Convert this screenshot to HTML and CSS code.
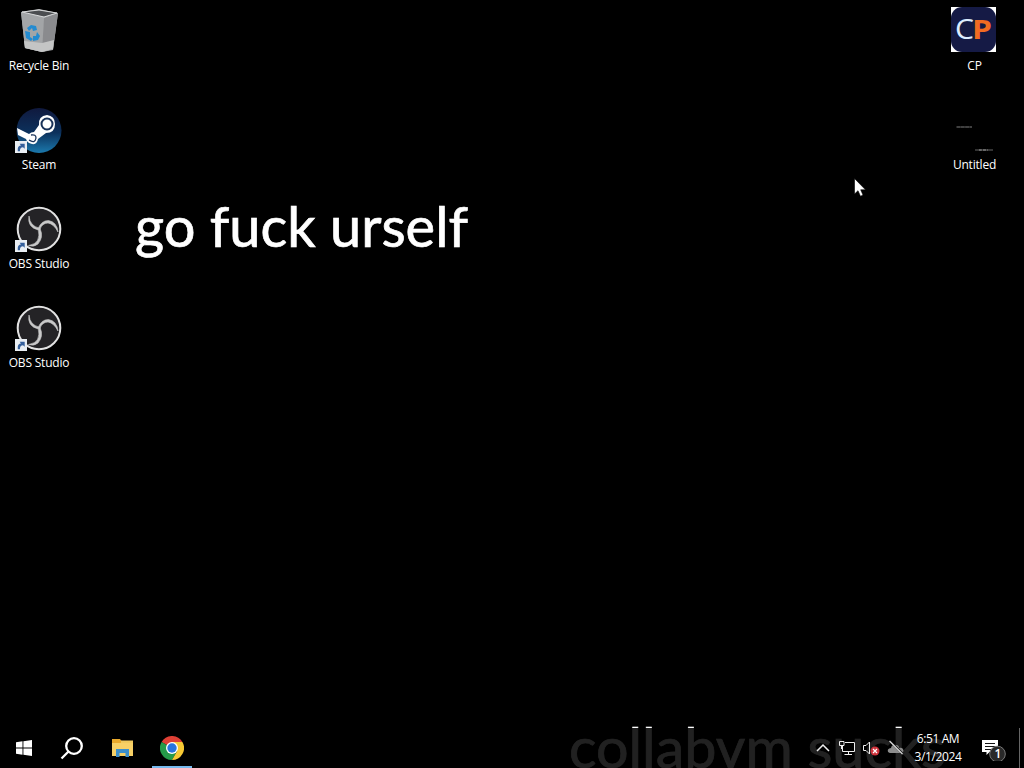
FILE: index.html
```html
<!DOCTYPE html>
<html lang="en">
<head>
    <meta charset="UTF-8">
    <title>Desktop</title>
    <link rel="stylesheet" href="styles.css">
</head>
<body>
    <svg class="symbols">
        <symbol id="shortcut" viewBox="0 0 13 13">
            <rect width="13" height="13" fill="#e9eef3"/>
            <path d="M3 11V8.5Q3.2 5.5 6.5 5L5 3H10.5V8.5L8.7 6.8Q5.3 7 5.3 11Z" fill="#345f9b"/>
        </symbol>
        <symbol id="obs" viewBox="0 0 46 46">
            <circle cx="23" cy="23" r="21.300" fill="#242326" stroke="#e2e2e2" stroke-width="2"/>
            <g fill="#c9c9c9" stroke="#c9c9c9" stroke-width=".6">
                <path d="M13 10Q14 20 23 22L22.500 24Q11 21.500 13 10Z"/>
                <path d="M22 23Q25 14.500 32.500 14.500Q41 16 42 26Q38 18 32 17Q26 17 24 23.500Z"/>
                <path d="M22 22.500H24Q28 31 22 38Q18 41.500 12.500 39.500Q26 37.500 22 22.500Z"/>
            </g>
        </symbol>
    </svg>

    <div class="desktop">
        <svg class="wallpaper" viewBox="0 0 1024 768">
            <text x="135" y="247" textLength="333" lengthAdjust="spacingAndGlyphs">go fuck urself</text>
            <text x="569" y="767.800" textLength="377" lengthAdjust="spacingAndGlyphs">collabvm sucks</text>
        </svg>

        <div class="icons">
            <div class="column">
                <div class="icon">
                    <svg viewBox="0 0 48 48">
                        <path d="M6 6L24 3L43 7L38 44L27 46L10 42Z" fill="#a9abad"/>
                        <path d="M6 6L29 12L27 46L10 42Z" fill="#a3a5a7"/>
                        <path d="M29 12L43 7L38 43L27 46Z" fill="#8a8b8e"/>
                        <path d="M9 35L27 37L39 34L38 43L27 46L10 42Z" fill="#c4c5c5"/>
                        <path d="M7 6L24 4L42 7L29 11Z" fill="#4b4d50" stroke="#d7d8d9"/>
                        <g fill="#248bd0">
                            <path d="M12 22L16 19L21 20L22 24L18 25L17 22L14 25Z"/>
                            <path d="M10 25L15 26L15 31L18 33L16 35L11 32Z"/>
                            <path d="M18 35V30L21 30L22 26L25 30L23 34Z"/>
                        </g>
                    </svg>
                    <span class="label">Recycle Bin</span>
                </div>
                <div class="icon">
                    <svg viewBox="0 0 48 48">
                        <defs>
                            <linearGradient id="steam" x2="0" y2="1">
                                <stop offset="0" stop-color="#10193e"/>
                                <stop offset=".55" stop-color="#0c315c"/>
                                <stop offset="1" stop-color="#1b79ad"/>
                            </linearGradient>
                        </defs>
                        <circle cx="24" cy="25.500" r="22.500" fill="url(#steam)"/>
                        <path d="M2 23L14 29Q16 27 19 27L24 20Q23 11 32 10Q40 11 40 19Q40 28 31 28L23 34Q22 40 17 39Q12 38 11 34L3 30Z" fill="#fff"/>
                        <circle cx="32" cy="19" r="5.500" fill="#fff" stroke="#183158" stroke-width="2"/>
                        <path d="M14 35Q20 39 21 33Q21 29 16 30" fill="none" stroke="#183158" stroke-width="1.3"/>
                        <use href="#shortcut" x="0" y="36" width="12" height="12"/>
                    </svg>
                    <span class="label">Steam</span>
                </div>
                <div class="icon">
                    <svg viewBox="0 0 48 48">
                        <use href="#obs" x="1" y="2" width="46" height="46"/>
                        <use href="#shortcut" x="0" y="36" width="12" height="12"/>
                    </svg>
                    <span class="label">OBS Studio</span>
                </div>
                <div class="icon">
                    <svg viewBox="0 0 48 48">
                        <use href="#obs" x="1" y="2" width="46" height="46"/>
                        <use href="#shortcut" x="0" y="36" width="12" height="12"/>
                    </svg>
                    <span class="label">OBS Studio</span>
                </div>
            </div>
            <div class="column">
                <div class="icon">
                    <svg viewBox="0 0 48 48">
                        <rect x="0" y="1" width="45" height="45" fill="#fff"/>
                        <rect x="0" y="1" width="45" height="45" rx="11" fill="#151a45"/>
                        <text class="logo" x="4" y="33" textLength="19" lengthAdjust="spacingAndGlyphs" fill="#dcecff">C</text>
                        <text class="logo bold" x="21" y="33" textLength="20" lengthAdjust="spacingAndGlyphs" fill="#f26b22">P</text>
                    </svg>
                    <span class="label">CP</span>
                </div>
                <div class="icon">
                    <svg viewBox="0 0 48 48">
                        <path d="M5.500 22H21" stroke="#555" stroke-width="1.500" stroke-dasharray="4 .3"/>
                        <path d="M24 45H42" stroke="#666" stroke-dasharray="6 .5"/>
                        <path d="M28 45H37" stroke="#999" stroke-dasharray="3 1"/>
                    </svg>
                    <span class="label">Untitled</span>
                </div>
            </div>
        </div>

        <div class="taskbar">
            <div class="button">
                <svg width="16" height="16" viewBox="0 0 16 16" fill="#fff"><path d="M0 2.200L6.500 1.300V7.500H0ZM7.400 1.200L16 0V7.500H7.400ZM0 8.400H6.500V14.700L0 13.800ZM7.400 8.400H16V16L7.400 14.800Z"/></svg>
            </div>
            <div class="button">
                <svg width="24" height="24" viewBox="0 0 24 24" fill="none" stroke="#fff" stroke-width="2.300"><circle cx="14" cy="10" r="7.800"/><path d="M8.500 15.500L1.500 22.500"/></svg>
            </div>
            <div class="button explorer">
                <svg width="24" height="24" viewBox="0 0 24 24"><path d="M1 3H9L10.500 5H22V20H1Z" fill="#e9a92c"/><path d="M1 7H22V20H1Z" fill="#f7d066"/><path d="M10 4.500H22V7H10Z" fill="#f0c95d"/><path d="M5 21V13H18V21H14.500V17H8.500V21Z" fill="#3c8fcb"/></svg>
            </div>
            <div class="button running">
                <svg width="24" height="24" viewBox="0 0 24 24"><path d="M12 12L1.600 6A12 12 0 0 1 22.400 6Z" fill="#df4035"/><path d="M12 12L1.600 6A12 12 0 0 0 12 24L17.200 15Z" fill="#259b49"/><path d="M12 6H22.400A12 12 0 0 1 12 24L17.200 15Z" fill="#f7c934"/><circle cx="12" cy="12" r="6" fill="#fff"/><circle cx="12" cy="12" r="4.700" fill="#2875df"/></svg>
            </div>

            <div class="tray">
                <svg width="16" height="16" viewBox="0 0 16 16" fill="none" stroke="#eee" stroke-width="1.500"><path d="M2 11L8 5L14 11"/></svg>
                <svg width="16" height="16" viewBox="0 0 16 16" fill="none" stroke="#eee"><path d="M6 2.500H15.500V11.500H3.500V6M9.500 11.500V14M5.500 14.500H13M.5 1.500H5V5.500H.5ZM2.500 5.500V9"/></svg>
                <svg width="18" height="16" viewBox="0 0 18 16"><path d="M.5 5.500H3L6.500 2V14L3 10.500H.5Z" fill="none" stroke="#eee"/><circle cx="12" cy="11" r="4.500" fill="#ce333c"/><path d="M10 9L14 13M14 9L10 13" stroke="#fff" stroke-width="1.200"/></svg>
                <svg width="18" height="16" viewBox="0 0 18 16"><path d="M3 13Q0 12 1 9.500Q2 8 4 8Q5 4 9 5Q12 5 12 8Q16 7 16.500 11Q16 13 14 13Z" fill="#8c8c8c"/><path d="M3 1L15.500 13.500" stroke="#111" stroke-width="2.200"/><path d="M2.500 1L15.500 14" stroke="#ddd" stroke-width="1.200"/></svg>
            </div>
            <div class="clock">
                <span>6:51 AM</span>
                <span>3/1/2024</span>
            </div>
            <div class="notifications">
                <svg width="26" height="26" viewBox="0 0 26 26"><path d="M1 5H17V17H8.500L5.500 20V17H1Z" fill="#fff"/><path d="M4 8.500H14M4 11.500H14M4 14.500H10" stroke="#151515"/><circle cx="16.500" cy="19" r="7.800" fill="#292929" stroke="#777"/><text class="count" x="13.500" y="23">1</text></svg>
            </div>
            <div class="show-desktop"></div>
        </div>

        <svg class="cursor" width="12" height="19" viewBox="0 0 12 19"><path d="M.5 .5V16L4 12.700L6.500 18.300L9 17L6.700 11.800H11.500Z" fill="#fff" stroke="#000" stroke-width=".6"/></svg>
    </div>
</body>
</html>
```
FILE: styles.css
```css
body {
    margin: 0;
    background-color: #000;
    color: #fff;
    font-family: "Open Sans", "Noto Sans", sans-serif;
    overflow: hidden;
}
.symbols {
    display: none;
}
.desktop {
    position: relative;
    display: flex;
    flex-direction: column;
    height: 768px;
}
.wallpaper {
    position: absolute;
    inset: 0;
    font-family: Lato, sans-serif;
    font-size: 57px;
    fill: #fff;
    stroke: #fff;
    stroke-width: 0.7px;
}
.icons {
    position: relative;
    flex: 1;
    display: flex;
    justify-content: space-between;
    padding: 6px 12px 0 1px;
}
.column {
    width: 76px;
}
.column:last-child {
    width: 75px;
}
.icon {
    display: flex;
    flex-direction: column;
    align-items: center;
    height: 99px;
}
.icon svg {
    width: 48px;
    height: 48px;
}
.label {
    font-size: 12px;
    line-height: 16px;
    margin-top: 4px;
    letter-spacing: -0.2px;
    white-space: nowrap;
}
.logo {
    font-size: 27px;
}
.bold {
    font-weight: 700;
}
.taskbar {
    position: relative;
    display: flex;
    height: 40px;
    background-color: rgba(0, 0, 0, 0.87);
}
.button {
    display: flex;
    align-items: center;
    justify-content: center;
    width: 48px;
}
.button.explorer {
    width: 54px;
}
.button.running {
    width: 40px;
    box-sizing: border-box;
    margin-left: 2px;
    border-bottom: 2px solid #76b9ed;
    padding-top: 2px;
}
.tray {
    display: flex;
    align-items: center;
    gap: 8px;
    margin-left: auto;
}
.tray svg:nth-child(4) {
    margin-left: -2px;
}
.clock {
    display: flex;
    flex-direction: column;
    align-items: center;
    width: 66px;
    padding-top: 2px;
    font-size: 12px;
    line-height: 18px;
    letter-spacing: -0.4px;
}
.notifications {
    display: flex;
    align-items: center;
    width: 39px;
    margin-left: 9px;
}
.notifications svg {
    margin-left: 1px;
}
.count {
    font-size: 12px;
    font-weight: 600;
    fill: #fff;
}
.show-desktop {
    width: 5px;
    border-left: 1px solid #666;
    box-sizing: border-box;
}
.cursor {
    position: absolute;
    left: 854px;
    top: 178px;
}
```
